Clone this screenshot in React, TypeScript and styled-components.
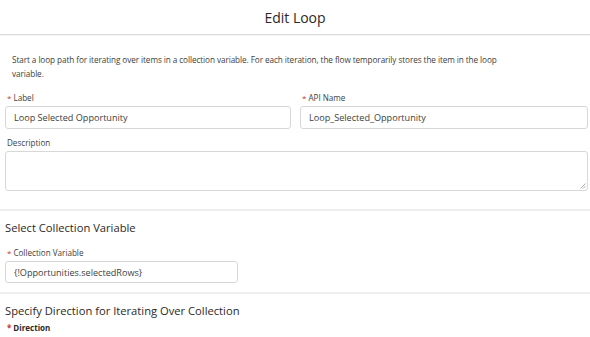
import React from 'react';
import styled, { createGlobalStyle } from 'styled-components';

const GlobalStyle = createGlobalStyle`
  html, body {
    margin: 0;
    padding: 0;
    background: #ffffff;
  }
  body {
    font-family: 'Open Sans', 'Noto Sans', sans-serif;
    color: #3e3e3c;
    overflow: hidden;
  }
  * {
    box-sizing: border-box;
  }
`;

const Modal = styled.div`
  width: 590px;
  height: 337px;
  overflow: hidden;
  background: #ffffff;
`;

const Header = styled.header`
  height: 35px;
  display: flex;
  align-items: center;
  justify-content: center;
  border-bottom: 1px solid #dddbda;
  box-shadow: 0 1px 1px rgba(0, 0, 0, 0.04);
`;

const Title = styled.h1`
  margin: 0;
  font-size: 14px;
  font-weight: 400;
  color: #2b2826;
  padding-top: 1px;
`;

const Section = styled.section<{ $divider?: boolean }>`
  padding: 0 2px 0 5px;
  border-bottom: ${({ $divider }) => ($divider ? '2px solid #eeeeee' : 'none')};
`;

const Intro = styled.p`
  margin: 0;
  max-width: 500px;
  padding: 18px 0 9px 7px;
  font-size: 8.2px;
  letter-spacing: -0.08px;
  line-height: 13.5px;
  color: #3e3e3c;
`;

const FieldGrid = styled.div`
  display: grid;
  grid-template-columns: 286px 1fr;
  column-gap: 9px;
`;

const Field = styled.div<{ $width?: number }>`
  display: flex;
  flex-direction: column;
  width: ${({ $width }) => ($width ? `${$width}px` : 'auto')};
`;

const Label = styled.label<{ $bold?: boolean }>`
  display: flex;
  align-items: center;
  height: 17px;
  padding-left: 2px;
  font-size: ${({ $bold }) => ($bold ? '8px' : '8.1px')};
  font-weight: ${({ $bold }) => ($bold ? 700 : 400)};
  color: ${({ $bold }) => ($bold ? '#2b2826' : '#3e3e3c')};
`;

const Required = styled.abbr`
  color: #c23934;
  text-decoration: none;
  margin-right: 2px;
  font-size: 8px;
`;

const Input = styled.div<{ $height?: number }>`
  height: ${({ $height }) => $height ?? 23}px;
  display: flex;
  align-items: center;
  padding-left: 8px;
  border: 1px solid #d8d8d8;
  border-radius: 3px;
  font-size: 9.1px;
  color: #3e3e3c;
  background: #ffffff;
`;

const TextArea = styled.div`
  position: relative;
  height: 40px;
  border: 1px solid #d8d8d8;
  border-radius: 3px;
  background: #ffffff;
`;

const Grip = styled.svg`
  position: absolute;
  right: 1px;
  bottom: 1px;
`;

const Heading = styled.h2`
  margin: 0;
  padding-top: 9px;
  line-height: 16px;
  font-size: 11.2px;
  font-weight: 400;
  color: #2b2826;
`;

const Stack = styled.div<{ $gap?: number; $top?: number; $bottom?: number }>`
  display: flex;
  flex-direction: column;
  gap: ${({ $gap }) => $gap ?? 0}px;
  padding-top: ${({ $top }) => $top ?? 0}px;
  padding-bottom: ${({ $bottom }) => $bottom ?? 0}px;
`;

export default function App() {
  return (
    <>
      <GlobalStyle />
      <Modal>
        <Header>
          <Title>Edit Loop</Title>
        </Header>

        <Section $divider>
          <Intro>
            Start a loop path for iterating over items in a collection variable. For each iteration, the flow temporarily
            stores the item in the loop variable.
          </Intro>
          <Stack $gap={5} $bottom={18}>
            <FieldGrid>
              <Field>
                <Label>
                  <Required title="required">*</Required>Label
                </Label>
                <Input>Loop Selected Opportunity</Input>
              </Field>
              <Field>
                <Label>
                  <Required title="required">*</Required>API Name
                </Label>
                <Input>Loop_Selected_Opportunity</Input>
              </Field>
            </FieldGrid>
            <Field>
              <Label>Description</Label>
              <TextArea>
                <Grip width="6" height="6" viewBox="0 0 6 6">
                  <path d="M5.5 0.5 L0.5 5.5 M5.5 3 L3 5.5" stroke="#9a9a9a" strokeWidth="0.8" fill="none" />
                </Grip>
              </TextArea>
            </Field>
          </Stack>
        </Section>

        <Section $divider>
          <Heading>Select Collection Variable</Heading>
          <Stack $top={8} $bottom={9}>
            <Field $width={233}>
              <Label>
                <Required title="required">*</Required>Collection Variable
              </Label>
              <Input $height={22}>{'{!Opportunities.selectedRows}'}</Input>
            </Field>
          </Stack>
        </Section>

        <Section>
          <Heading>Specify Direction for Iterating Over Collection</Heading>
          <Label $bold>
            <Required title="required">*</Required>Direction
          </Label>
        </Section>
      </Modal>
    </>
  );
}
